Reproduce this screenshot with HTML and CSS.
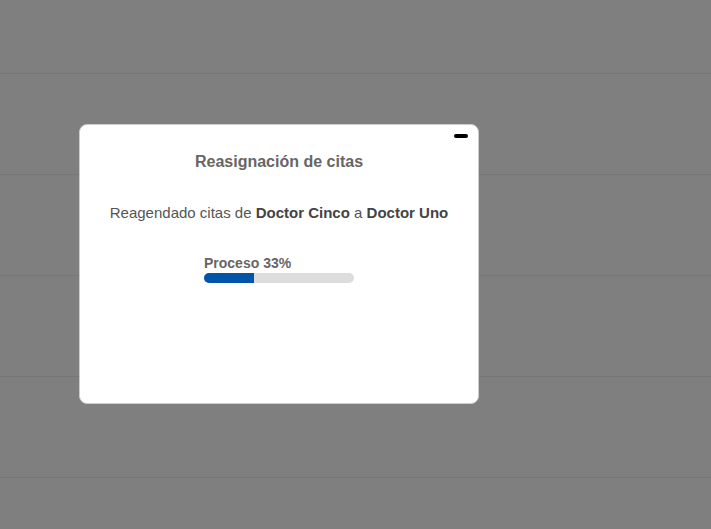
FILE: index.html
```html
<!DOCTYPE html>
<html lang="es">
<head>
    <meta charset="UTF-8">
    <meta name="viewport" content="width=device-width, initial-scale=1.0">
    <title>Reasignación de citas</title>
    <link rel="stylesheet" href="styles.css">
</head>
<body>
    <div class="page">
        <div class="page-head"></div>
        <div class="row"></div>
        <div class="row"></div>
        <div class="row"></div>
        <div class="row"></div>
        <div class="row"></div>
    </div>

    <!-- Modal de progreso -->
    <div class="overlay">
        <div class="modal">
            <div class="modal-top">
                <span class="min-btn"></span>
            </div>
            <h2 class="modal-title">Reasignación de citas</h2>
            <p class="modal-text">Reagendado citas de <b>Doctor Cinco</b> a <b>Doctor Uno</b></p>
            <div class="progress">
                <div class="progress-label">Proceso 33%</div>
                <div class="progress-track">
                    <div class="progress-fill" style="width: 33%"></div>
                </div>
            </div>
        </div>
    </div>
</body>
</html>
```

FILE: styles.css
```css
body { margin: 0; font-family: "Liberation Sans", Arial, sans-serif; background: #fff; overflow: hidden; }

.page { height: 529px; overflow: hidden; }
.page-head { height: 73px; border-bottom: 1px solid #eee; }
.row { height: 100px; border-bottom: 1px solid #eee; }

.overlay {
    position: fixed;
    left: 0;
    top: 0;
    width: 100%;
    height: 100%;
    background-color: rgba(0,0,0,0.5);
    display: flex;
    align-items: flex-start;
    padding: 124px 0 0 79px;
    box-sizing: border-box;
}

.modal {
    width: 400px;
    height: 280px;
    box-sizing: border-box;
    background: #fff;
    border: 1px solid #ccc;
    border-radius: 8px;
    padding: 9px 10px 0 10px;
    text-align: center;
}

.modal-top { display: flex; justify-content: flex-end; }
.min-btn { display: block; width: 14px; height: 4px; background: #000; border-radius: 2px; }

.modal-title {
    margin: 14px 0 0;
    font-size: 16px;
    font-weight: bold;
    color: #666;
    line-height: 20px;
}

.modal-text {
    margin: 31px 0 0;
    font-size: 15px;
    color: #555;
    line-height: 20px;
}
.modal-text b { color: #444; }

.progress { width: 150px; margin: 32px auto 0; text-align: left; }
.progress-label { font-size: 14px; font-weight: bold; color: #666; line-height: 16px; }
.progress-track { height: 10px; background: #ddd; border-radius: 5px; overflow: hidden; margin-top: 2px; }
.progress-fill { height: 100%; background: #0055a8; }
```
